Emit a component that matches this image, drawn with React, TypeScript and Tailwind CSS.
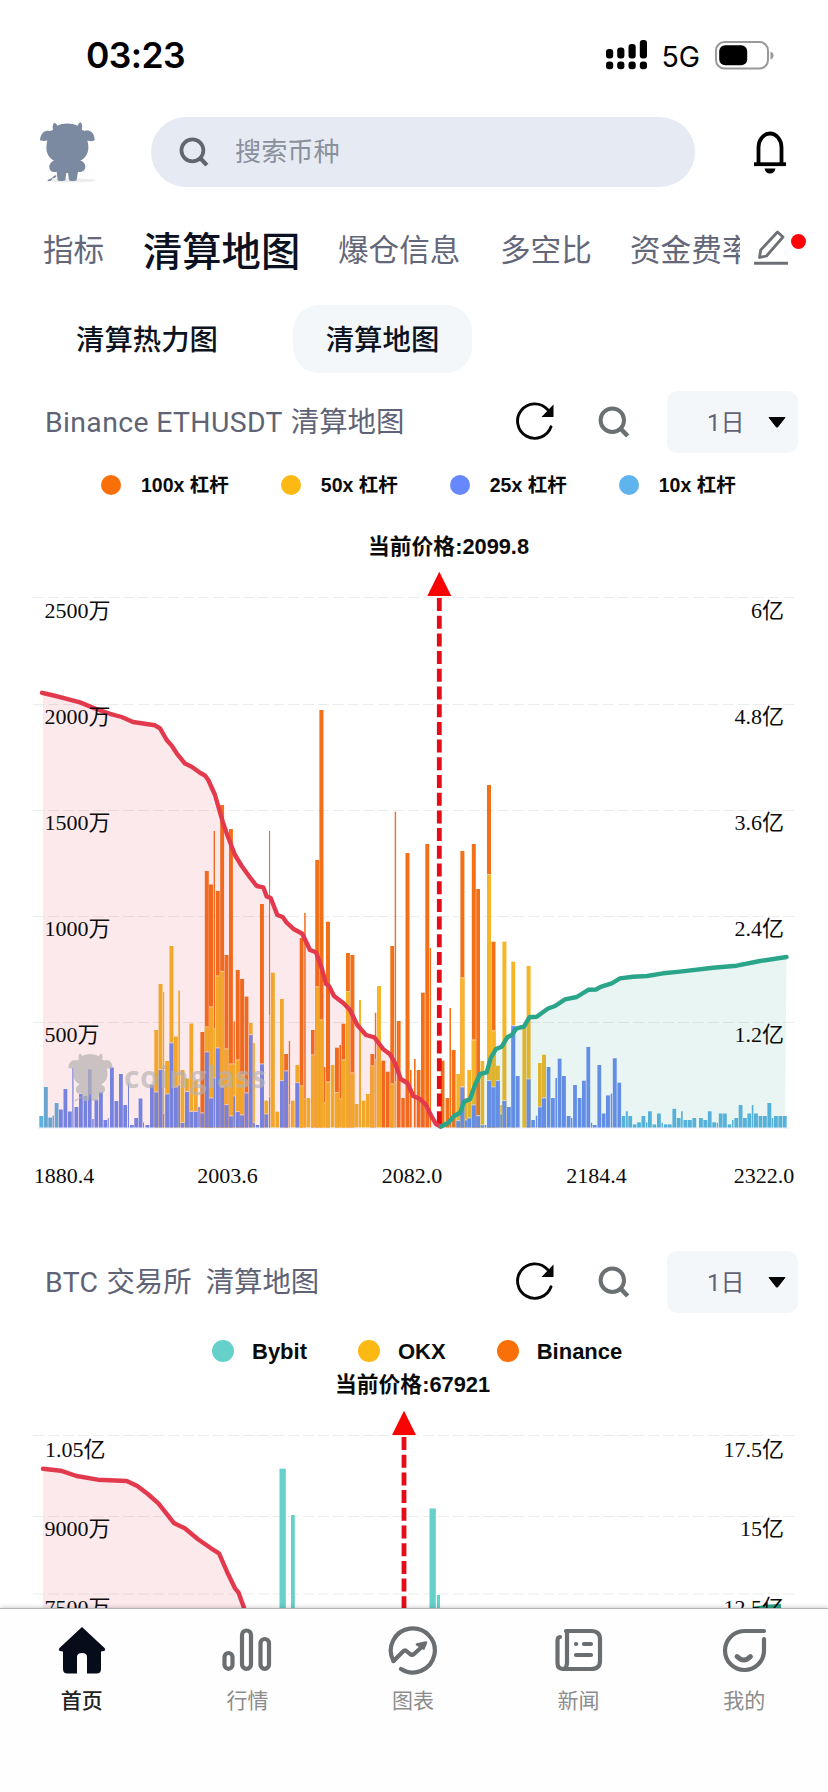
import type { ReactNode } from 'react'

// [x, width, low top, mid top, high top], 0 = segment missing
type Bar = [number, number, number, number, number]
type Point = [number, number]

const BASE = 1127.5

const ethBars: Bar[] = [
  [39.3, 4, 1116, 0, 0], [44, 3.8, 1087, 0, 0], [48.3, 3.7, 1117.6, 0, 0], [52.5, 1.5, 1115.7, 0, 0],
  [54.7, 3.8, 1103, 0, 0], [59, 3.8, 1109.5, 0, 0], [63.5, 3.8, 1089, 0, 0], [68, 3.8, 1111.5, 0, 0],
  [72.3, 1.2, 1068, 0, 0], [74.5, 3.8, 1107, 0, 0], [79, 3.8, 1094, 0, 0], [83.5, 3.8, 1096, 0, 0],
  [88, 3.6, 1069.5, 0, 0], [92.2, 1.5, 1119, 0, 0], [94.5, 3.8, 1099.6, 0, 0], [99, 3.8, 1092, 0, 0],
  [103.5, 3.8, 1120, 0, 0], [107.8, 1, 1118, 0, 0], [110, 3.8, 1067.5, 0, 0], [114.5, 3.8, 1101, 0, 0],
  [119, 3.8, 1074, 0, 0], [123.3, 3.8, 1105, 0, 0], [128, 1, 1083.5, 0, 0], [130, 3.8, 1125, 0, 0],
  [134.3, 3.8, 1118, 0, 0], [138.6, 3.8, 1098.5, 0, 0], [143, 1, 1122.5, 0, 0], [145.5, 3.8, 1125, 0, 0],
  [150, 3.8, 1085, 0, 0], [154.3, 3.9, 1092, 1030, 0], [158.6, 3.9, 1069.7, 984, 0], [163, 1.2, 1113.7, 992, 0],
  [165.2, 3.8, 1094, 1061, 0], [169.5, 3.9, 1043, 946, 0], [174, 3.8, 1087, 1036.5, 0], [178.3, 1.7, 1085, 990.5, 0],
  [180.6, 3.8, 1122.6, 1070, 0], [185, 3.9, 1091.6, 1078.5, 0], [189.4, 3.8, 1111.5, 1023.5, 0],
  [193.8, 3.9, 1111.5, 1080.5, 0], [198.2, 1.6, 1107, 0, 0], [200.4, 4, 1113, 0, 1032],
  [204.8, 4, 1052, 1027, 871], [209, 4, 1098, 1007, 884.5], [213.6, 1.4, 1078, 1029, 831],
  [215.8, 3.9, 1048, 976, 891], [220.2, 3.9, 1087, 971.5, 805], [224.5, 4, 1104.7, 1049, 955],
  [229, 3.9, 1116, 1064, 829], [233.5, 1.4, 1096, 1064, 1021.5], [235.8, 3.9, 1111.7, 1060, 970],
  [240.1, 4, 1115, 1075, 979], [244.6, 3.8, 1093, 0, 996.6], [249, 3.6, 1034.7, 1023, 0],
  [253.2, 1.6, 1122.6, 1043, 0], [255.7, 3.4, 1125, 0, 0], [260, 3.9, 1064, 0, 904], [264.4, 3.8, 1114, 1100.7, 0],
  [269, 1.1, 1096.7, 1016, 831], [270.8, 4, 0, 972.7, 0], [275.4, 3.8, 0, 1111.7, 0], [280, 3.8, 1080.7, 999, 0],
  [284.2, 3.9, 1071, 0, 1054], [288.8, 1.3, 0, 1105, 1041], [291, 3.6, 0, 1100.7, 0], [295.4, 3.8, 1082.7, 1065, 0],
  [299.7, 3.8, 0, 1086, 938], [304.2, 1.5, 0, 1099, 913], [306.4, 3.8, 0, 1098, 0], [311, 3.6, 0, 1055, 1030],
  [315.2, 4, 0, 987, 860], [319.4, 4.1, 0, 1020, 710], [324, 1.4, 0, 1103, 1067], [326, 4, 0, 1082, 921.7],
  [330.7, 3.8, 0, 1065, 0], [335, 3.9, 0, 1092.7, 1047.7], [339.4, 1.6, 0, 1099, 1045], [341.5, 3.9, 0, 1060, 1023.7],
  [346, 3.9, 0, 991.7, 953], [350.4, 4, 0, 1073, 955], [354.7, 3.8, 0, 1104, 0], [359, 2, 0, 1000, 0],
  [361.7, 3.8, 0, 1100.7, 0], [366, 3.8, 0, 1094, 0], [370.4, 3.8, 0, 1066, 1054], [374.8, 1.5, 0, 1060, 1012.7],
  [377, 4, 0, 986, 0], [381.4, 3.8, 0, 0, 1060.7], [385.8, 3.8, 0, 0, 1071.7], [390.3, 3.8, 0, 1084, 946],
  [394.7, 1.4, 0, 1082, 811.7], [396.8, 3.8, 0, 0, 1021], [401.3, 3.5, 0, 0, 1098], [405.5, 4, 0, 0, 853],
  [410, 1.6, 0, 0, 1070], [414, 1.6, 0, 0, 1059], [416.7, 3.8, 0, 0, 1070], [421, 3.8, 0, 0, 992.7],
  [425.3, 4, 0, 0, 844], [429.8, 1.3, 0, 0, 948], [440.7, 3.8, 0, 0, 1060.7], [445.6, 3.6, 0, 0, 1098],
  [449.5, 1.5, 0, 0, 1008], [451.7, 3.9, 0, 0, 1050], [456.3, 3.8, 1120.7, 1074, 0], [460.4, 4, 1087, 978, 851],
  [465, 2, 1120, 1098, 0], [467.3, 3.8, 1118, 1070, 0], [471.8, 4, 1105, 1040, 844], [476.2, 3.8, 1115.7, 0, 889],
  [480.5, 3.7, 1125, 1061, 0], [484.8, 1.5, 1125, 0, 0], [487, 4, 1080.7, 874.7, 785], [491.5, 4, 1087, 1031, 941.7],
  [496, 3.8, 1080.7, 1065.7, 0], [500.3, 1.6, 1114, 1105, 0], [502.4, 4, 1100.7, 941.7, 0], [507, 3.8, 1107, 0, 0],
  [511.3, 3.9, 1025.7, 961.7, 0], [515.8, 3.8, 1076, 0, 0], [522.4, 3.8, 0, 1025, 0], [526.6, 4, 1079, 966, 0],
  [531.3, 3.6, 1120, 0, 0], [535.8, 1.5, 1115.7, 0, 0], [538, 3.7, 1107, 1063, 0], [542, 4, 1098, 1054.7, 0],
  [546.7, 3.7, 1067, 0, 0], [551, 3.8, 1098, 0, 0], [555.4, 1.6, 1078, 0, 0], [557.7, 3.8, 1058.7, 0, 0],
  [562, 3.9, 1076, 0, 0], [566.7, 3.8, 1116, 0, 0], [571, 1.4, 1118, 0, 0], [573.1, 3.8, 1085, 0, 0],
  [577.7, 3.8, 1098, 0, 0], [582, 3.8, 1080.7, 0, 0], [586.4, 3.8, 1047, 0, 0], [590.8, 1.4, 1122.7, 0, 0],
  [592.8, 3.8, 1125, 0, 0], [597.4, 3.8, 1065, 0, 0], [601.8, 3.7, 1113.5, 0, 0], [606, 3.9, 1095.4, 0, 0],
  [610.7, 1.5, 1093.7, 0, 0], [612.8, 3.9, 1058.3, 0, 0], [617.4, 3.7, 1082.7, 0, 0], [621.8, 3.4, 1116, 0, 0],
  [625.8, 2, 1111.3, 0, 0], [628.3, 3.8, 1116, 0, 0], [632.8, 3.7, 1124.4, 0, 0], [637.2, 3.7, 1122.3, 0, 0],
  [641.5, 3.8, 1116, 0, 0], [646, 1.4, 1122.3, 0, 0], [648, 3.8, 1111.3, 0, 0], [652.5, 3.7, 1124.4, 0, 0],
  [657, 3.8, 1113.5, 0, 0], [661.5, 1.4, 1122.7, 0, 0], [663.8, 3.7, 1124.4, 0, 0], [668, 3.7, 1124.4, 0, 0],
  [672.4, 3.8, 1108.8, 0, 0], [676.8, 3.8, 1118, 0, 0], [681.1, 1.6, 1111.3, 0, 0], [683.5, 3.9, 1120, 0, 0],
  [688, 3.8, 1120, 0, 0], [692.4, 3.8, 1118, 0, 0], [699, 3.8, 1118, 0, 0], [703.4, 3.8, 1120, 0, 0],
  [707.8, 3.8, 1111.3, 0, 0], [712.3, 3.8, 1122.3, 0, 0], [716.8, 1.3, 1122.7, 0, 0], [718.8, 3.8, 1113.5, 0, 0],
  [723.1, 3.7, 1113.5, 0, 0], [727.7, 3.5, 1124.4, 0, 0], [732, 1.5, 1120, 0, 0], [734.4, 3.7, 1118, 0, 0],
  [738.7, 3.8, 1105, 0, 0], [743, 3.8, 1118, 0, 0], [747.4, 3.8, 1113.5, 0, 0], [751.8, 1.6, 1105, 0, 0],
  [754, 3.9, 1113.5, 0, 0], [758.6, 3.8, 1116, 0, 0], [763, 3.8, 1116, 0, 0], [767.4, 3.9, 1103, 0, 0],
  [771.8, 1.5, 1118, 0, 0], [774, 3.8, 1116, 0, 0], [778.4, 3.8, 1116, 0, 0], [782.7, 4, 1116, 0, 0],
]

const ethLong: Point[] = [
  [42, 692.8], [51.7, 695], [63, 697.8], [80, 702.4], [95, 708.5], [110, 713.8], [121.7, 717], [133, 722],
  [155, 725.3], [160, 728.4], [166.7, 740], [171.7, 745.6], [176.7, 753.3], [185, 763.6], [191.7, 766.7],
  [200, 772.8], [205, 775.5], [208.3, 780], [215, 795], [222.7, 821.7], [227.3, 835], [235, 855], [241.7, 866],
  [250, 877.5], [256.7, 886], [263.3, 887.3], [266.7, 896.5], [270.7, 898], [277.3, 915], [282.7, 917],
  [286.7, 922.7], [294, 929.3], [302.3, 933.7], [310, 950], [316, 952.3], [321.7, 968], [326, 984], [329, 986],
  [334, 996], [343.3, 1003], [350, 1010], [357.3, 1025], [366, 1035], [374.3, 1037.3], [383.3, 1049.3],
  [390, 1054.3], [395, 1063], [400.7, 1079], [407.3, 1083], [413.3, 1096], [420, 1099], [426, 1105],
  [431.7, 1116.7], [436, 1124], [440.5, 1126.7],
]

const ethShort: Point[] = [
  [441, 1126.5], [448.3, 1122.7], [454, 1116], [460, 1112.7], [464, 1101.7], [470, 1099.3], [475, 1085],
  [480, 1074], [486.7, 1072.3], [490.7, 1058], [496, 1049], [501.7, 1046.7], [507.3, 1037.3], [511.7, 1035],
  [516.7, 1028.3], [524, 1026.7], [529.3, 1017.3], [536.7, 1016.7], [548, 1008.5], [555, 1006], [565, 999.3],
  [576.7, 997], [588.3, 989.8], [596, 989.5], [600.7, 986.8], [611.7, 983.4], [620, 978.4], [633, 976.7],
  [647, 976], [663, 973.3], [680, 971.6], [713, 967.8], [736.7, 965.7], [760, 961], [786.5, 957],
]

const btcLong: Point[] = [
  [43, 1468.7], [60.7, 1470.7], [76.6, 1476], [97.7, 1479.7], [126.7, 1481], [137.3, 1486], [147.8, 1494],
  [158.4, 1503.3], [174.2, 1523.3], [184.8, 1528.3], [198, 1539.3], [211, 1548.3], [219, 1553.3], [227, 1571.7],
  [235, 1588.3], [238.6, 1592.7], [245.5, 1612],
]

const toPoints = (points: Point[]) => points.map((p) => p.join(',')).join(' ')

function Gridlines({ ys }: { ys: number[] }) {
  return (
    <>
      {ys.map((y) => (
        <line key={y} x1="33" x2="794" y1={y} y2={y} stroke="#ebecec" strokeDasharray="11 4" />
      ))}
    </>
  )
}

function AxisLabels({ labels }: { labels: [string, number, number, 'start' | 'middle' | 'end'][] }) {
  return (
    <g className="font-['Liberation_Serif','Noto_Sans_CJK_SC',serif] text-[22px]" fill="#0c0c0c">
      {labels.map(([text, x, y, anchor]) => (
        <text key={text} x={x} y={y} textAnchor={anchor}>
          {text}
        </text>
      ))}
    </g>
  )
}

function PriceMarker({ x, top, bottom }: { x: number; top: number; bottom: number }) {
  return (
    <>
      <path d={`M${x} ${top}l12 24.3h-24z`} fill="#f80404" />
      <line x1={x} x2={x} y1={top + 26.3} y2={bottom} stroke="#e50b17" strokeWidth="4.8" strokeDasharray="13 4.7" />
    </>
  )
}

function MascotShape() {
  return (
    <>
      <path d="M69 38c-4 5-5 13-3 22l-9 3c-9-3-27-1-30 27 1 3 18 4 22 1-3 12-4 30 0 39 4 11 11 17 20 22-7 1-14 10-14 18 0 7 3 13 9 15 5 2 9 0 13 0l3 25c0 4 22 4 23 0l3-21h5l3 21c1 4 22 4 23 0l4-25c8 4 22-2 22-15 0-10-7-17-15-18 11-5 18-13 22-25 4-11 2-25-1-36 4 4 21 3 22-1-1-29-21-30-30-27l-9-4c3-9 2-17-3-22-6 2-7 6-9 10-20-9-45-9-61 0-1-4-4-8-10-9z" />
      <path d="M75 196c-10 1-7 8-17 10-6 1-8 6-8 8 9 0 13-3 14-9 7 0 10-3 13-7z" />
    </>
  )
}

function EthChart() {
  return (
    <svg className="block h-[720px] w-full" viewBox="0 506 828 720">
      <Gridlines ys={[597.5, 704.5, 810.5, 916.5, 1022.5]} />
      <text
        x="448.5"
        y="554"
        textAnchor="middle"
        className="font-['Liberation_Sans','Noto_Sans_CJK_SC',sans-serif] text-[21.8px] font-bold"
        fill="#0b0b0b"
      >
        当前价格:2099.8
      </text>
      <line x1="38" x2="790" y1="1128" y2="1128" stroke="#e4ecf8" />
      {ethBars.map(([x, w, low, mid, high]) => (
        <g key={x}>
          {high > 0 && <rect x={x} y={high} width={w} height={BASE - high} fill="#f27018" />}
          {mid > 0 && <rect x={x} y={mid} width={w} height={BASE - mid} fill="#f5b526" />}
          {low > 0 && (
            <rect x={x} y={low} width={w} height={BASE - low} fill={x < 58 || x > 621 ? '#5cb3e2' : '#6a8cf0'} />
          )}
          {mid > 0 && high > 0 && <rect x={x} y={mid - 0.6} width={w} height="1" fill="#fbd9a0" />}
          {low > 0 && (mid > 0 || high > 0) && <rect x={x} y={low - 0.6} width={w} height="1" fill="#ecdcd8" />}
        </g>
      ))}
      <polygon points={`43,${BASE} 43,693 ${toPoints(ethLong.slice(1))}`} fill="#e8384f" fillOpacity="0.11" />
      <polygon points={`${toPoints(ethShort)} 785,${BASE} 441,${BASE}`} fill="#2aa58a" fillOpacity="0.11" />
      <PriceMarker x={439.3} top={571.7} bottom={1127} />
      <polyline points={toPoints(ethLong)} fill="none" stroke="#e3394d" strokeWidth="4.4" strokeLinecap="round" strokeLinejoin="round" />
      <polyline points={toPoints(ethShort)} fill="none" stroke="#2aa58a" strokeWidth="4.4" strokeLinecap="round" strokeLinejoin="round" />
      <g fill="#b5b2b2" fillOpacity="0.72">
        <g transform="translate(61 1043.5) scale(.27)">
          <MascotShape />
        </g>
        <text x="124" y="1088" textLength="142" className="font-['Open_Sans',sans-serif] text-[30px] font-bold" fillOpacity="0.68">
          coinglass
        </text>
      </g>
      <AxisLabels
        labels={[
          ['2500万', 44.5, 618, 'start'],
          ['2000万', 44.5, 724, 'start'],
          ['1500万', 44.5, 830, 'start'],
          ['1000万', 44.5, 936, 'start'],
          ['500万', 44.5, 1041.5, 'start'],
          ['6亿', 784, 618, 'end'],
          ['4.8亿', 784, 724, 'end'],
          ['3.6亿', 784, 830, 'end'],
          ['2.4亿', 784, 936, 'end'],
          ['1.2亿', 784, 1041.5, 'end'],
          ['1880.4', 64, 1183, 'middle'],
          ['2003.6', 227.5, 1183, 'middle'],
          ['2082.0', 412, 1183, 'middle'],
          ['2184.4', 596.5, 1183, 'middle'],
          ['2322.0', 764, 1183, 'middle'],
        ]}
      />
    </svg>
  )
}

function BtcChart() {
  return (
    <svg className="block h-[241px] w-full" viewBox="0 1367 828 241">
      <Gridlines ys={[1435.5, 1516.5, 1594]} />
      <text
        x="412.5"
        y="1392"
        textAnchor="middle"
        className="font-['Liberation_Sans','Noto_Sans_CJK_SC',sans-serif] text-[21.8px] font-bold"
        fill="#0b0b0b"
      >
        当前价格:67921
      </text>
      <g fill="#66d0ca">
        <rect x="279.5" y="1468.7" width="6.3" height="150" />
        <rect x="291" y="1515" width="3.8" height="100" />
        <rect x="429.5" y="1508.5" width="6.3" height="100" />
        <rect x="436.8" y="1595" width="3.2" height="20" />
      </g>
      <polygon points={`43,1620 ${toPoints(btcLong)} 248,1620`} fill="#e8384f" fillOpacity="0.11" />
      <polyline points={toPoints(btcLong)} fill="none" stroke="#e3394d" strokeWidth="4.4" strokeLinecap="round" strokeLinejoin="round" />
      <path d="M753 1609l14-2 14-1" fill="none" stroke="#2aa58a" strokeWidth="4.4" />
      <PriceMarker x={404} top={1410.7} bottom={1610} />
      <AxisLabels
        labels={[
          ['1.05亿', 45, 1456.5, 'start'],
          ['9000万', 44.5, 1536, 'start'],
          ['7500万', 44.5, 1615, 'start'],
          ['17.5亿', 784, 1456.5, 'end'],
          ['15亿', 784, 1536, 'end'],
          ['12.5亿', 784, 1615, 'end'],
        ]}
      />
    </svg>
  )
}

function SearchIcon({ className, color }: { className: string; color: string }) {
  return (
    <svg className={className} viewBox="0 0 32 32" fill="none" stroke={color} strokeWidth="4">
      <circle cx="14.3" cy="14.2" r="11.7" />
      <path d="M22.5 22.5l7.2 7.5" strokeWidth="4.6" />
    </svg>
  )
}

function ChartHeader({ pair, title }: { pair: string; title: string }) {
  return (
    <div className="flex h-[62px] items-center pr-[30px] pl-[45px]">
      <h2 className="flex flex-1 gap-2 pt-[3px] font-[Roboto,'Noto_Sans_CJK_SC',sans-serif] text-[28.4px] whitespace-pre text-[#606376]">
        <span className="tracking-[0.36px]">{pair}</span>
        <span>{title}</span>
      </h2>
      <svg className="mr-[43px] h-10 w-10" viewBox="0 0 40 40" fill="none">
        <path d="M32.5 7.5A17.2 17.2 0 1 0 36 24.8" stroke="#050505" strokeWidth="2.9" strokeLinecap="round" />
        <path d="M38.5 2.5v12.5H26.5z" fill="#050505" />
      </svg>
      <SearchIcon className="mr-[37px] h-8 w-8" color="#6b7073" />
      <button className="flex h-[62px] w-[131px] items-center rounded-[10px] bg-[#f3f7fa] pl-10">
        <span className="pt-0.5 font-[Roboto,'Noto_Sans_CJK_SC',sans-serif] text-[24px] text-[#606376]">1日</span>
        <svg className="mr-3 ml-auto h-[11px] w-[18px]" viewBox="0 0 18 11">
          <path d="M1 .5h16L9.6 10q-.6.7-1.2 0z" fill="#050505" stroke="#050505" strokeLinejoin="round" />
        </svg>
      </button>
    </div>
  )
}

const leverages = [
  { label: '100x 杠杆', dot: 'bg-[#f97008]' },
  { label: '50x 杠杆', dot: 'bg-[#fcb813]' },
  { label: '25x 杠杆', dot: 'bg-[#6787fc]' },
  { label: '10x 杠杆', dot: 'bg-[#5fb4ee]' },
]

const exchanges = [
  { label: 'Bybit', dot: 'bg-[#66d0ca]' },
  { label: 'OKX', dot: 'bg-[#fcb813]' },
  { label: 'Binance', dot: 'bg-[#f97008]' },
]

function StatusBar() {
  return (
    <div className="flex h-[117px] items-start pt-[33px] pr-[54px] pl-[86px]">
      <span className="flex-1 font-[Inter,sans-serif] text-[35.5px] leading-[45px] font-semibold tracking-[-0.6px] text-black">
        03:23
      </span>
      <svg className="mt-[6px] h-[31px] w-[42px]" viewBox="0 0 42 31">
        <g fill="#000">
          <rect x="0" y="10" width="7.2" height="9.5" rx="3" />
          <rect x="11.2" y="8.5" width="7.2" height="11" rx="3" />
          <rect x="22.5" y="5" width="7.2" height="14.5" rx="3" />
          <rect x="33.8" y="1" width="7.2" height="18.5" rx="3" />
          {[0, 11.2, 22.5, 33.8].map((x) => (
            <rect key={x} x={x} y="22.5" width="7.2" height="7.8" rx="3" />
          ))}
        </g>
      </svg>
      <span className="mr-[15px] ml-[13px] font-[Inter,sans-serif] text-[28.5px] leading-[47px] text-black">5G</span>
      <svg className="mt-2 h-[29px] w-[59px]" viewBox="0 0 59 29">
        <rect x="1" y="1" width="52" height="26.5" rx="8.5" fill="none" stroke="#999" strokeWidth="2" />
        <rect x="4.2" y="4.2" width="28" height="20" rx="6" fill="#000" />
        <path d="M55.5 10.5q3 1 3 4t-3 4z" fill="#999" />
      </svg>
    </div>
  )
}

function NavItem({ label, active, children }: { label: string; active?: boolean; children: ReactNode }) {
  return (
    <li className="flex flex-col items-center pt-[14px]">
      <svg className="h-[54px] w-[54px]" viewBox="0 0 54 54" fill="none" stroke="#6a6e70" strokeWidth="4.2" strokeLinecap="round" strokeLinejoin="round">
        {children}
      </svg>
      <span
        className={`mt-[7px] font-['Noto_Sans_CJK_SC',sans-serif] text-[21px] leading-[30px] ${active ? 'font-medium text-[#222]' : 'text-[#8c8c8c]'}`}
      >
        {label}
      </span>
    </li>
  )
}

export default function App() {
  return (
    <div className="flex h-[1792px] w-[828px] flex-col overflow-hidden bg-white font-['Noto_Sans_CJK_SC',sans-serif]">
      <StatusBar />

      <header className="flex h-[70px] items-center">
        <svg className="-mt-1 ml-[31px] h-20 w-20" viewBox="0 0 240 240" fill="#7b89a1">
          <ellipse cx="120" cy="211" rx="74" ry="6" fill="#ececec" />
          <MascotShape />
        </svg>
        <div className="ml-10 flex h-[70px] w-[544px] items-center rounded-full bg-[#e6ebf3] pl-[28px] text-[26.2px] text-[#8a909c]">
          <SearchIcon className="mr-[26px] h-[30px] w-[30px]" color="#60676e" />
          <span className="-mt-[2px]">搜索币种</span>
        </div>
        <svg className="ml-[57px] h-[44px] w-9" viewBox="0 0 36 44" fill="none">
          <path d="M6.5 34V17.5a11.5 14 0 0 1 23 0V34" stroke="#000" strokeWidth="3.8" />
          <path d="M2 34.2h32" stroke="#000" strokeWidth="3.8" />
          <path d="M12.5 38.5h11q-1 5-5.5 5t-5.5-5z" fill="#000" />
        </svg>
      </header>

      <nav className="mt-[30px] flex h-16 items-center pl-[43px] text-[30.6px] text-[#64677a]">
        <div className="flex w-[697px] items-center overflow-hidden whitespace-nowrap">
          <span className="w-[100px] shrink-0">指标</span>
          <span className="w-[195px] shrink-0 text-[39.3px] leading-[64px] font-medium text-[#0b1120]">清算地图</span>
          <span className="w-[162px] shrink-0">爆仓信息</span>
          <span className="w-[130px] shrink-0">多空比</span>
          <span className="shrink-0">资金费率</span>
        </div>
        <svg className="-mt-[5px] ml-[13px] h-9 w-9" viewBox="0 0 36 36" fill="none" stroke="#6d7076" strokeWidth="2.8" strokeLinejoin="round">
          <path d="M24.5 3l5.5 5L13.5 27 6.5 28.5l1.2-7.500z" />
          <path d="M1 34.3h34" strokeWidth="3" />
        </svg>
        <span className="mb-[15px] ml-[2px] size-[15px] rounded-full bg-[#fb0307]" />
      </nav>

      <div className="mt-6 flex h-[68px] items-center pl-[76px] text-[28.4px] font-medium text-[#0d1320]">
        <span className="-mt-0.5 w-[217px]">清算热力图</span>
        <span className="flex h-[68px] w-[179px] items-center justify-center rounded-[26px] bg-[#f3f7fa] pb-0.5">清算地图</span>
      </div>

      <section className="mt-[18px] h-[835px] shrink-0">
        <ChartHeader pair="Binance ETHUSDT" title="清算地图" />
        <ul className="mt-[21px] flex h-[22px] items-center pl-[101px] font-['Liberation_Sans','Noto_Sans_CJK_SC',sans-serif] text-[19.5px] font-bold text-[#0b0b0b]">
          {leverages.map((item) => (
            <li key={item.label} className="mr-[52px] flex items-center gap-5">
              <span className={`size-5 rounded-full ${item.dot}`} />
              <span className="pt-0.5">{item.label}</span>
            </li>
          ))}
        </ul>
        <div className="mt-[10px]">
          <EthChart />
        </div>
      </section>

      <section className="mt-[25px] h-[357px] shrink-0 overflow-hidden">
        <ChartHeader pair="BTC" title="交易所  清算地图" />
        <ul className="mt-[27px] flex h-[22px] items-center pl-[212px] font-['Liberation_Sans',sans-serif] text-[22px] font-bold text-[#0b0b0b]">
          {exchanges.map((item) => (
            <li key={item.label} className="mr-[51px] flex items-center gap-[18px]">
              <span className={`size-[22px] rounded-full ${item.dot}`} />
              {item.label}
            </li>
          ))}
        </ul>
        <div className="mt-[5px]">
          <BtcChart />
        </div>
      </section>

      <footer className="z-10 h-[184px] shrink-0 border-t border-[#b5b5b5] bg-[#fefefe] shadow-[0_-1px_4px_rgba(0,0,0,0.18)]">
        <ul className="-ml-px grid w-[828px] grid-cols-5">
          <NavItem label="首页" active>
            <path d="M27 4L4.5 25q-1.5 2 .5 3l3 .5V46q0 4.5 4.5 4.500h9.500V34q0-4 5-4t5 4v16.500h9.500q4.500 0 4.500-4.500V28.500l3-.5q2-1 .5-3z" fill="#070c1a" stroke="none" />
          </NavItem>
          <NavItem label="行情">
            <rect x="4.5" y="30" width="8" height="15.8" rx="4" />
            <rect x="22" y="7.5" width="9" height="38.3" rx="4.5" />
            <rect x="40.5" y="16" width="8.5" height="29.8" rx="4.25" />
          </NavItem>
          <NavItem label="图表">
            <path d="M7.5 38A22 22 0 1 1 15 46" />
            <path d="M7.5 38l9.500-9.500q2-2 4 0l3 2.500q2 1.500 4 0l10-9" />
            <path d="M31 21.5l9-2-2.500 6z" fill="#6a6e70" strokeWidth="2.6" />
          </NavItem>
          <NavItem label="新闻">
            <path d="M14 8h25q9 0 9 8v22q0 8-9 8H12q3-2 3-6V8" />
            <path d="M8 14q-2.500 0-2.500 4v22q0 6 6 6" />
            <path d="M24 21h.2M32 21h7M24 32h15" />
          </NavItem>
          <NavItem label="我的">
            <path d="M47 8H27A19.500 19.500 0 1 0 47 28V16" />
            <path d="M20 33.5q7 7 13.500 0" strokeWidth="4.800" />
          </NavItem>
        </ul>
      </footer>
    </div>
  )
}
